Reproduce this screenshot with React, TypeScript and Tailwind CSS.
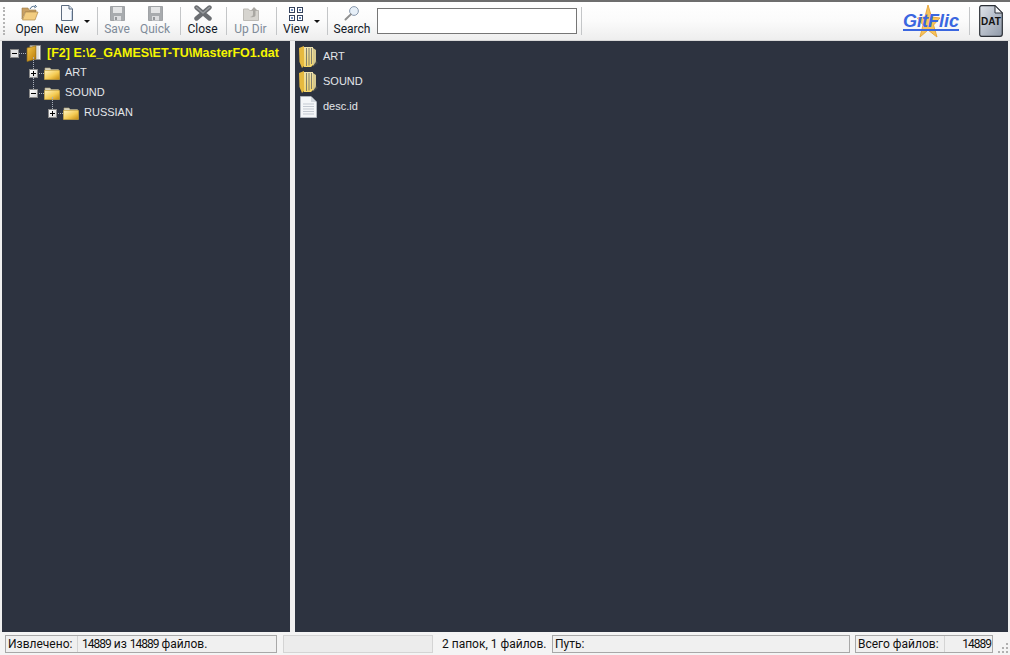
import React from 'react'

const uiFont = { fontFamily: 'Roboto, "Noto Sans", sans-serif' }

function OpenIcon() {
  return (
    <svg width="18" height="16" viewBox="0 0 18 16">
      <path d="M1 3h6l1 2h7v2H4L1 14z" fill="#c9a063" stroke="#9a7a45" strokeWidth="0.6" />
      <path d="M1.5 15 L4.5 7 H17 L14 15z" fill="#f3cd80" stroke="#b08a4a" strokeWidth="0.7" />
      <path d="M9 4 C10 1.6 12 1 14 1.4 M14 0 L15.5 1.6 L13.4 2.8" fill="none" stroke="#4a6a8a" strokeWidth="1" />
    </svg>
  )
}

function NewIcon() {
  return (
    <svg width="14" height="16" viewBox="0 0 14 16">
      <path d="M1.5 .5h7.5l3.5 3.5v11.5h-11z" fill="#f7f9fc" stroke="#5d6c80" />
      <path d="M9 .5v3.5h3.5" fill="#d5e0ee" stroke="#5d6c80" />
      <path d="M11 6v9h1V6z" fill="#c5d3e6" />
    </svg>
  )
}

function DiskIcon() {
  return (
    <svg width="15" height="15" viewBox="0 0 15 15">
      <path d="M.5.5h14v14H.5z" fill="#a8abae" stroke="#a0a3a6" />
      <rect x="3" y="1" width="9" height="6" fill="#e4e5e6" />
      <rect x="4" y="10" width="7" height="4.5" fill="#dcdddf" />
      <rect x="5" y="11" width="2" height="3" fill="#94979a" />
    </svg>
  )
}

function CloseIcon() {
  return (
    <svg width="18" height="16" viewBox="0 0 18 16">
      <path d="M2.5 2.5 L15.5 13.5 M15.5 2.5 L2.5 13.5" stroke="#6b6e72" strokeWidth="4.4" strokeLinecap="round" />
      <path d="M2.5 2.5 L9 8 M15.5 2.5 L9 8" stroke="#989b9f" strokeWidth="1.6" strokeLinecap="round" />
    </svg>
  )
}

function UpDirIcon() {
  return (
    <svg width="16" height="15" viewBox="0 0 16 15">
      <path d="M.5 3h5l1 1.5h9v10H.5z" fill="#d6d4cf" stroke="#bdbbb6" />
      <path d="M11 1 L14.5 4.5 H12.5 V9 C12.5 11 10 11.5 7 11 C9.5 10.5 10 9.5 10 8 V4.5 H8z" fill="#a9a7a2" />
    </svg>
  )
}

function ViewIcon() {
  const cells = [[0, 0], [8, 0], [0, 8], [8, 8]]
  return (
    <svg width="14" height="14" viewBox="0 0 14 14">
      {cells.map(([x, y]) => (
        <g key={`${x}-${y}`}>
          <rect x={x + 0.5} y={y + 0.5} width="5" height="5" fill="#fff" stroke="#33415c" />
          <rect x={x + 2} y={y + 2} width="2" height="2" fill="#6f8fc0" />
        </g>
      ))}
    </svg>
  )
}

function SearchIcon() {
  return (
    <svg width="16" height="16" viewBox="0 0 16 16">
      <circle cx="10" cy="6" r="4.4" fill="#e6eff8" stroke="#8a9aae" />
      <path d="M6.8 9.4 L1.5 14.5" stroke="#8f8f8f" strokeWidth="2" strokeLinecap="round" />
    </svg>
  )
}

function TreeFolder({ id }: { id: string }) {
  return (
    <svg width="16" height="13" viewBox="0 0 16 13" className="shrink-0">
      <defs>
        <linearGradient id={id} x1="0" y1="0" x2="1" y2="1">
          <stop offset="0" stopColor="#fff4c0" />
          <stop offset="0.55" stopColor="#f5cc55" />
          <stop offset="1" stopColor="#c48a10" />
        </linearGradient>
      </defs>
      <path d="M1 1h5l1 1.5h7.5v1H1z" fill="#d9d4c0" stroke="#b5a97c" strokeWidth="0.6" />
      <path d="M.5 3.5h15v9H.5z" fill={`url(#${id})`} stroke="#d8b040" strokeWidth="0.6" />
    </svg>
  )
}

function ArchiveIcon() {
  return (
    <svg width="16" height="17" viewBox="0 0 16 17" className="shrink-0">
      <defs>
        <linearGradient id="book" x1="0" y1="0" x2="1" y2="1">
          <stop offset="0" stopColor="#f6c94a" />
          <stop offset="1" stopColor="#b77806" />
        </linearGradient>
      </defs>
      <path d="M4 .5h10.5v14H4z" fill="#f6f6f4" stroke="#8b8b8b" />
      <path d="M1 3 L10 .8 V14 L1 16.5z" fill="url(#book)" stroke="#8a6a1c" strokeWidth="0.7" />
      <path d="M12 1v13" stroke="#c8c8c8" />
    </svg>
  )
}

function TallFolder({ id }: { id: string }) {
  return (
    <svg width="20" height="24" viewBox="0 0 20 24" className="shrink-0">
      <defs>
        <linearGradient id={id} x1="0" y1="0" x2="0" y2="1">
          <stop offset="0" stopColor="#eee2b0" />
          <stop offset="1" stopColor="#f5d565" />
        </linearGradient>
      </defs>
      <path d="M1 3 L6 1 V21 L4 23 L1.5 17z" fill="#e6b93f" />
      <path d="M6 2 H15 V20 L13 22 H6z" fill={`url(#${id})`} />
      <path d="M8.5 3v18 M11 3v17.5 M13.5 3v16" stroke="#7f7e6c" strokeWidth="1" />
      <path d="M15 3 L18 5 V17 L15 21z" fill="#d6c88e" />
      <path d="M18 15 L20 18 L15 22z" fill="#6b6a58" opacity="0.35" />
    </svg>
  )
}

function FileIcon() {
  return (
    <svg width="17" height="22" viewBox="0 0 17 22" className="shrink-0">
      <path d="M.5.5h10.5l5.5 5.5v15.5H.5z" fill="#f4f6f8" stroke="#aeb4bc" />
      <path d="M11 .5V6h5.5z" fill="#d3d8de" />
      <path d="M3 8h11M3 10.5h11M3 13h11M3 15.5h11M3 18h11" stroke="#c3c9d1" />
    </svg>
  )
}

function DatIcon() {
  return (
    <svg width="24" height="32" viewBox="0 0 24 32" className="shrink-0">
      <defs>
        <linearGradient id="dat" x1="0" y1="0" x2="1" y2="1">
          <stop offset="0" stopColor="#dfe3ea" />
          <stop offset="1" stopColor="#8f99a8" />
        </linearGradient>
      </defs>
      <path d="M2.5.7h13.5l7.3 7.3v21a2.3 2.3 0 0 1-2.3 2.3H2.5A2 2 0 0 1 .7 29V3A2 2 0 0 1 2.5.7z" fill="url(#dat)" stroke="#2b2f36" strokeWidth="1.2" />
      <path d="M16 .7V8h7.3z" fill="#f4f5f7" stroke="#2b2f36" />
      <text x="12" y="20" textAnchor="middle" fontSize="10" fontWeight="700" fontFamily="Liberation Sans, sans-serif" fill="#111">DAT</text>
    </svg>
  )
}

function GitFlic() {
  return (
    <div className="relative w-[60px] h-[34px] shrink-0">
      <svg width="24" height="34" viewBox="0 0 24 34" className="absolute left-[16px] top-0">
        <path d="M11 1 L14.5 13 L23 14 L16.5 21 L20 33 L11 26 L3 33 L6 21 L0.5 14 L8 13z" fill="#f6c35c" stroke="#e8a83f" strokeWidth="1" />
      </svg>
      <span className="absolute left-[2px] top-[9px] text-[18px] leading-[16px] font-bold italic text-[#3a66e0] border-b-2 border-[#3a66e0]" style={{ fontFamily: '"Liberation Sans", sans-serif' }}>
        GitFlic
      </span>
    </div>
  )
}

function Sep() {
  return <div className="w-px h-[28px] bg-[#c4c6c8] shrink-0" />
}

function Arrow() {
  return <div className="w-0 h-0 border-l-[3px] border-r-[3px] border-t-[3px] border-l-transparent border-r-transparent border-t-[#111]" />
}

type BtnProps = { label: string; w: string; off?: boolean; children: React.ReactNode }

function ToolBtn({ label, w, off, children }: BtnProps) {
  return (
    <div className={`flex flex-col items-center shrink-0 ${w}`}>
      <div className="h-[17px] flex items-end justify-center">{children}</div>
      <span className={`text-[12px] leading-[17px] whitespace-nowrap ${off ? 'text-[#7f8b99]' : 'text-[#111827]'}`}>{label}</span>
    </div>
  )
}

function Toolbar() {
  return (
    <div className="h-[39px] shrink-0 flex items-center bg-gradient-to-b from-white via-[#fbfbfb] to-[#eeeeee] border-b border-[#d8d8d8] pl-[3px] pr-[6px]" style={uiFont}>
      <div className="w-[2px] h-[28px] shrink-0 border-l-2 border-dotted border-[#b4b4b4] mr-[7px]" />
      <ToolBtn label="Open" w="w-[35px]"><OpenIcon /></ToolBtn>
      <ToolBtn label="New" w="w-[40px]"><NewIcon /></ToolBtn>
      <div className="w-[10px] flex justify-center shrink-0 ml-[-5px]"><Arrow /></div>
      <div className="w-[5px] shrink-0" />
      <Sep />
      <ToolBtn label="Save" w="w-[38px]" off><DiskIcon /></ToolBtn>
      <ToolBtn label="Quick" w="w-[38px]" off><DiskIcon /></ToolBtn>
      <div className="w-[6px] shrink-0" />
      <Sep />
      <ToolBtn label="Close" w="w-[43px]"><CloseIcon /></ToolBtn>
      <div className="w-[2px] shrink-0" />
      <Sep />
      <ToolBtn label="Up Dir" w="w-[47px]" off><UpDirIcon /></ToolBtn>
      <div className="w-[2px] shrink-0" />
      <Sep />
      <ToolBtn label="View" w="w-[38px]"><ViewIcon /></ToolBtn>
      <div className="w-[10px] flex justify-center shrink-0 ml-[-3px]"><Arrow /></div>
      <div className="w-[5px] shrink-0" />
      <Sep />
      <ToolBtn label="Search" w="w-[48px]"><SearchIcon /></ToolBtn>
      <div className="w-[200px] h-[26px] shrink-0 bg-white border border-[#767676] ml-[1px]" />
      <div className="w-[4px] shrink-0" />
      <Sep />
      <div className="flex-1" />
      <GitFlic />
      <div className="w-[8px] shrink-0" />
      <Sep />
      <div className="w-[9px] shrink-0" />
      <DatIcon />
      <div className="w-[1px] shrink-0" />
    </div>
  )
}

function Toggle({ open }: { open?: boolean }) {
  return (
    <div className="w-[9px] h-[9px] shrink-0 relative bg-gradient-to-br from-white to-[#d8d8d8] border border-[#8a8a8a]">
      <div className="absolute left-[1px] top-[3px] w-[5px] h-px bg-black" />
      {!open && <div className="absolute left-[3px] top-[1px] w-px h-[5px] bg-black" />}
    </div>
  )
}

type TreeRowProps = { indent: string; open?: boolean; label: string; id: string }

function TreeRow({ indent, open, label, id }: TreeRowProps) {
  return (
    <div className={`relative h-[20px] flex items-center ${indent}`}>
      <div className="absolute top-[-6px] h-[12px] border-l border-dotted border-[#aab0ba] ml-[4px]" />
      <Toggle open={open} />
      <div className="w-[5px] shrink-0 ml-px border-t border-dotted border-[#aab0ba]" />
      <TreeFolder id={id} />
      <span className="ml-[5px] mb-px text-[11px] text-[#e4e6ea] whitespace-nowrap">{label}</span>
    </div>
  )
}

function Tree() {
  return (
    <div className="w-[288px] shrink-0 bg-[#2d3340] pt-[2px]" style={{ fontFamily: '"Liberation Sans", sans-serif' }}>
      <div className="h-[20px] flex items-center pl-[8px]">
        <div className="w-[9px] h-[9px] shrink-0 relative bg-[#e4e4e4] border border-[#8a8a8a]">
          <div className="absolute left-[1px] top-[3px] w-[5px] h-px bg-black" />
        </div>
        <div className="w-[7px] shrink-0 border-t border-dotted border-[#aab0ba]" />
        <ArchiveIcon />
        <span className="ml-[5px] text-[12.5px] font-bold text-[#f6f600] whitespace-nowrap">[F2] E:\2_GAMES\ET-TU\MasterFO1.dat</span>
      </div>
      <TreeRow indent="pl-[27px]" label="ART" id="f1" />
      <TreeRow indent="pl-[27px]" open label="SOUND" id="f2" />
      <TreeRow indent="pl-[46px]" label="RUSSIAN" id="f3" />
    </div>
  )
}

function FileList() {
  return (
    <div className="flex-1 bg-[#2d3340] pt-[3px] pl-[3px]" style={{ fontFamily: '"Liberation Sans", sans-serif' }}>
      <div className="h-[25px] flex items-center">
        <TallFolder id="t1" />
        <span className="ml-[5px] text-[11px] text-[#e4e6ea]">ART</span>
      </div>
      <div className="h-[25px] flex items-center">
        <TallFolder id="t2" />
        <span className="ml-[5px] text-[11px] text-[#e4e6ea]">SOUND</span>
      </div>
      <div className="h-[25px] flex items-center">
        <div className="w-[20px] flex justify-center shrink-0"><FileIcon /></div>
        <span className="ml-[5px] text-[11px] text-[#e4e6ea]">desc.id</span>
      </div>
    </div>
  )
}

function StatusBar() {
  return (
    <div className="h-[23px] shrink-0 bg-[#f4f4f4] flex items-center pl-[5px] text-[12px] text-[#111]" style={uiFont}>
      <div className="w-[272px] h-[18px] shrink-0 flex bg-[#f0f0f0] border border-[#a8a8a8] leading-[16px]">
        <div className="w-[72px] pl-[2px] border-r border-[#d4d4d4] whitespace-nowrap">Извлечено:</div>
        <div className="pl-[4px] whitespace-nowrap">
          <span className="tracking-[-1px]">14889</span> из <span className="tracking-[-1px]">14889</span> файлов.
        </div>
      </div>
      <div className="w-[150px] h-[18px] ml-[6px] shrink-0 bg-[#ececec] border border-[#d4d4d4]" />
      <div className="w-[119px] shrink-0 pl-[9px] whitespace-nowrap">2 папок, 1 файлов.</div>
      <div className="w-[298px] h-[18px] shrink-0 bg-[#f0f0f0] border border-[#a8a8a8] pl-[2px] leading-[16px]">Путь:</div>
      <div className="w-[138px] h-[18px] ml-[5px] shrink-0 flex bg-[#f0f0f0] border border-[#a8a8a8] leading-[16px]">
        <div className="w-[89px] pl-[2px] border-r border-[#d4d4d4] whitespace-nowrap">Всего файлов:</div>
        <div className="flex-1 text-right pr-[1px] tracking-[-1px]">14889</div>
      </div>
      <div className="flex-1 h-full flex items-end justify-end pb-[2px] pr-[2px]">
        <div className="w-[10px] h-[10px] grid grid-cols-3 gap-[2px]">
          <i /><i /><i className="bg-[#b0b0b0]" />
          <i /><i className="bg-[#b0b0b0]" /><i className="bg-[#b0b0b0]" />
          <i className="bg-[#b0b0b0]" /><i className="bg-[#b0b0b0]" /><i className="bg-[#b0b0b0]" />
        </div>
      </div>
    </div>
  )
}

export default function App() {
  return (
    <div className="w-[1010px] h-[655px] flex flex-col overflow-hidden bg-[#f0f0f0] border-t-2 border-[#6e6e6e]">
      <Toolbar />
      <div className="flex-1 min-h-0 flex pl-[2px] pr-[2px] bg-[#f0f0f0]">
        <Tree />
        <div className="w-[5px] shrink-0 bg-[#f0f0f0]" />
        <FileList />
      </div>
      <StatusBar />
    </div>
  )
}
